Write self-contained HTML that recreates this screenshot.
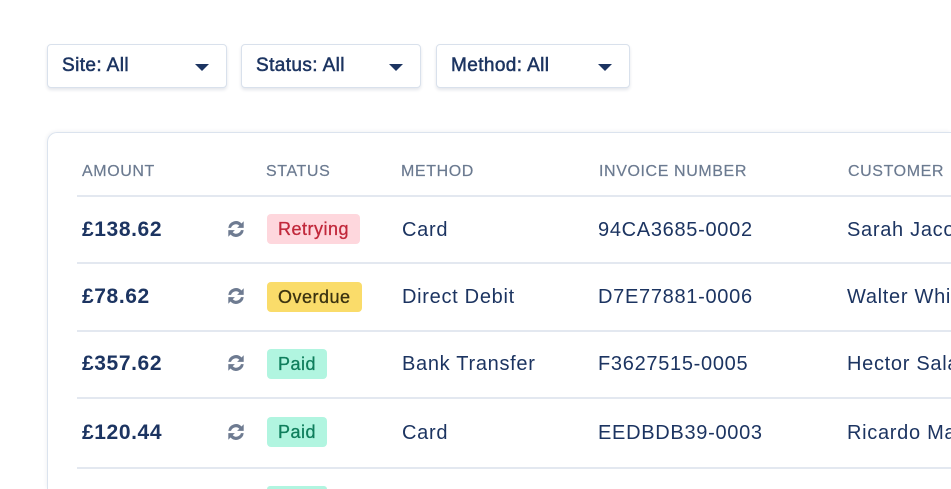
<!DOCTYPE html>
<html style="overflow:hidden;height:489px"><head><style>
*{margin:0;padding:0;box-sizing:border-box}
body{width:951px;height:489px;overflow:hidden;background:#fff;font-family:"Liberation Sans",sans-serif;color:#1c3461;position:relative}
.dd{position:absolute;top:44px;height:44px;border:1px solid #d9e1ec;border-radius:4px;box-shadow:0 2px 3px rgba(30,50,90,.12);font-size:19px;line-height:42px;padding-left:14px;background:#fff;letter-spacing:.4px;-webkit-text-stroke:.5px #1c3461}
.dd:after{content:"";position:absolute;right:17px;top:19px;border-left:7px solid transparent;border-right:7px solid transparent;border-top:7px solid #1c3461}
.card{position:absolute;left:47px;top:132px;width:904px;height:357px;border:1px solid #dbe3ee;border-right:none;border-bottom:none;border-radius:10px 0 0 0;box-shadow:-1px -1px 3px rgba(30,50,90,.06)}
.h{position:absolute;top:163px;font-size:16px;color:#6b7a90;letter-spacing:.6px;-webkit-text-stroke:.2px #6b7a90;white-space:nowrap}
.line{position:absolute;left:77px;width:874px;height:2px;background:#e3e8f0}
.t{position:absolute;font-size:20px;line-height:24px;white-space:nowrap;letter-spacing:.7px}
.b{font-weight:bold;letter-spacing:.6px;font-size:21px}
.bd{position:absolute;height:30px;line-height:30px;border-radius:4px;font-size:18px;padding:0 11px;letter-spacing:.5px;-webkit-text-stroke:.3px currentColor}
.ic{position:absolute;left:225px}
.clip{position:absolute;left:0;top:0;width:951px;height:489px;overflow:hidden}
</style></head><body><div class="clip">
<div class="dd" style="left:47px;width:180px">Site: All</div>
<div class="dd" style="left:241px;width:180px">Status: All</div>
<div class="dd" style="left:436px;width:194px">Method: All</div>
<div class="card"></div>
<div class="h" style="left:82px">AMOUNT</div>
<div class="h" style="left:266px">STATUS</div>
<div class="h" style="left:401px">METHOD</div>
<div class="h" style="left:599px">INVOICE NUMBER</div>
<div class="h" style="left:848px">CUSTOMER</div>
<div class="line" style="top:195px"></div>
<div class="line" style="top:262px"></div>
<div class="line" style="top:330px"></div>
<div class="line" style="top:397px"></div>
<div class="line" style="top:467px"></div>

<svg width="0" height="0" style="position:absolute"><defs><g id="r"><path d="M3 9a7 7 0 0 1 12-4l2-2v6h-6l2-2a4.5 4.5 0 0 0-7.5 2z M17 11a7 7 0 0 1-12 4l-2 2v-6h6l-2 2a4.5 4.5 0 0 0 7.5-2z" fill="#6e7b91"/></g></defs></svg>

<div class="t b" style="left:82px;top:218px">£138.62</div>
<svg class="ic" style="top:218px" width="22" height="22" viewBox="0 0 20 20"><use href="#r"/></svg>
<div class="bd" style="left:267px;top:214px;background:#fed7dd;color:#c1283b">Retrying</div>
<div class="t" style="left:402px;top:218px">Card</div>
<div class="t" style="left:598px;top:218px">94CA3685-0002</div>
<div class="t" style="left:847px;top:218px">Sarah Jacobs</div>

<div class="t b" style="left:82px;top:285px">£78.62</div>
<svg class="ic" style="top:285px" width="22" height="22" viewBox="0 0 20 20"><use href="#r"/></svg>
<div class="bd" style="left:267px;top:282px;background:#fadc6a;color:#3a3210">Overdue</div>
<div class="t" style="left:402px;top:285px">Direct Debit</div>
<div class="t" style="left:598px;top:285px">D7E77881-0006</div>
<div class="t" style="left:847px;top:285px">Walter White</div>

<div class="t b" style="left:82px;top:352px">£357.62</div>
<svg class="ic" style="top:352px" width="22" height="22" viewBox="0 0 20 20"><use href="#r"/></svg>
<div class="bd" style="left:267px;top:349px;background:#b1f5e0;color:#0f7e5c">Paid</div>
<div class="t" style="left:402px;top:352px">Bank Transfer</div>
<div class="t" style="left:598px;top:352px">F3627515-0005</div>
<div class="t" style="left:847px;top:352px">Hector Salamanca</div>

<div class="t b" style="left:82px;top:421px">£120.44</div>
<svg class="ic" style="top:421px" width="22" height="22" viewBox="0 0 20 20"><use href="#r"/></svg>
<div class="bd" style="left:267px;top:417px;background:#b1f5e0;color:#0f7e5c">Paid</div>
<div class="t" style="left:402px;top:421px">Card</div>
<div class="t" style="left:598px;top:421px">EEDBDB39-0003</div>
<div class="t" style="left:847px;top:421px">Ricardo Martinez</div>

<div class="bd" style="left:267px;top:486px;height:3px;background:#b1f5e0;width:60px;border-radius:4px 4px 0 0"></div>
</div></body></html>
